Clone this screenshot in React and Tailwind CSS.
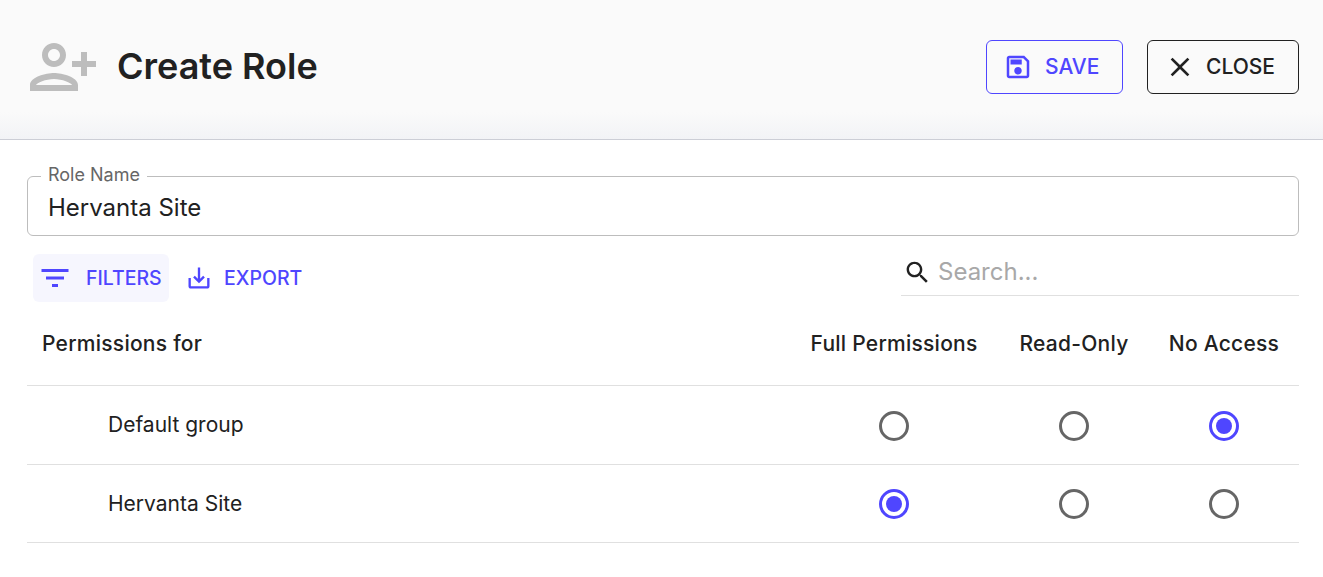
const icons = {
  personAdd:
    "M13 8c0-2.21-1.79-4-4-4S5 5.79 5 8s1.79 4 4 4 4-1.79 4-4zm-2 0c0 1.1-.9 2-2 2s-2-.9-2-2 .9-2 2-2 2 .9 2 2zM1 18v2h16v-2c0-2.66-5.33-4-8-4s-8 1.34-8 4zm2 0c.2-.71 3.3-2 6-2 2.69 0 5.77 1.28 6 2H3zm17-3v-3h3v-2h-3V7h-2v3h-3v2h3v3h2z",
  save:
    "M17 3H5c-1.11 0-2 .9-2 2v14c0 1.1.89 2 2 2h14c1.1 0 2-.9 2-2V7l-4-4zm2 16H5V5h11.17L19 7.83V19zm-7-7c-1.66 0-3 1.34-3 3s1.34 3 3 3 3-1.34 3-3-1.34-3-3-3zM6 6h9v4H6z",
  close:
    "M19 6.41 17.59 5 12 10.59 6.41 5 5 6.41 10.59 12 5 17.59 6.41 19 12 13.41 17.59 19 19 17.59 13.41 12z",
  filter: "M10 18h4v-2h-4v2zM3 6v2h18V6H3zm3 7h12v-2H6v2z",
  exportFile:
    "M19 12v7H5v-7H3v7c0 1.1.9 2 2 2h14c1.1 0 2-.9 2-2v-7h-2zm-6 .67l2.59-2.58L17 11.5l-5 5-5-5 1.41-1.41L11 12.67V3h2z",
  search:
    "M15.5 14h-.79l-.28-.27C15.41 12.59 16 11.11 16 9.5 16 5.91 13.09 3 9.5 3S3 5.91 3 9.5 5.91 16 9.5 16c1.61 0 3.09-.59 4.23-1.57l.27.28v.79l5 4.99L20.49 19l-4.99-5zm-6 0C7.01 14 5 11.99 5 9.5S7.01 5 9.5 5 14 7.01 14 9.5 11.99 14 9.5 14z",
};

function Icon({ d, size, className }) {
  return (
    <svg viewBox="0 0 24 24" width={size} height={size} fill="currentColor" className={className}>
      <path d={d} />
    </svg>
  );
}

function Radio({ checked }) {
  return (
    <div className="mt-[1px] flex justify-center">
      {checked ? (
        <span className="flex h-[30px] w-[30px] items-center justify-center rounded-full border-[3px] border-[#4f46ff]">
          <span className="h-[16px] w-[16px] rounded-full bg-[#4f46ff]" />
        </span>
      ) : (
        <span className="h-[30px] w-[30px] rounded-full border-[3px] border-[#666666]" />
      )}
    </div>
  );
}

const rows = [
  { name: "Default group", value: 2, height: "h-[79px]" },
  { name: "Hervanta Site", value: 0, height: "h-[78px]" },
];

export default function App() {
  return (
    <div className="min-h-[577px] bg-white font-['Inter',sans-serif] text-[#212121]">
      <header className="flex h-[140px] items-center justify-between border-b border-[#ccced6] bg-[linear-gradient(to_bottom,#fafafa_0,#fafafa_112px,#f2f3f6_139px)] pr-6 pl-[27px]">
        <div className="mb-[6px] flex items-center gap-[18px]">
          <Icon d={icons.personAdd} size={72} className="text-[#bdbdbd]" />
          <h1 className="mb-[2px] text-[36px] font-semibold">Create Role</h1>
        </div>
        <div className="mb-[6px] flex items-center gap-6">
          <button className="flex h-[54px] w-[137px] items-center gap-[12px] rounded-md border border-[#4f46ff] pl-[16px] text-[21px] font-medium text-[#4f46ff]">
            <Icon d={icons.save} size={30} />
            SAVE
          </button>
          <button className="flex h-[54px] w-[152px] items-center gap-[10px] rounded-md border border-[#212121] pl-[16px] text-[21px] font-medium">
            <Icon d={icons.close} size={32} />
            CLOSE
          </button>
        </div>
      </header>

      <main className="pr-6 pl-[27px]">
        <fieldset className="mt-[29px] h-[67px] rounded-md border border-[#bdbdbd] px-[13px] pb-0">
          <legend className="px-[7px] pb-[2px] text-[18px] leading-[12px] text-[#666666]">Role Name</legend>
          <div className="mt-[7px] px-[7px] text-[24px] leading-[36px]">Hervanta Site</div>
        </fieldset>

        <div className="mt-[18px] flex items-start justify-between">
          <div className="flex items-center text-[19.5px] font-medium text-[#4f46ff]">
            <button className="ml-[6px] flex h-[48px] w-[136px] items-center gap-[13px] rounded-md bg-[#f6f6fe] pl-[4px]">
              <Icon d={icons.filter} size={36} />
              <span className="mt-[2px]">FILTERS</span>
            </button>
            <button className="ml-[14px] flex h-[48px] items-center gap-[11px] px-[2px]">
              <Icon d={icons.exportFile} size={28} />
              <span className="mt-[2px]">EXPORT</span>
            </button>
          </div>
          <div className="flex h-[42px] w-[398px] items-center gap-[6px] border-b border-[#e0e0e0] pb-[5px] pl-[2px]">
            <Icon d={icons.search} size={29} />
            <span className="text-[24px] text-[#a8a8a8]">Search...</span>
          </div>
        </div>

        <div className="grid h-[84px] grid-cols-[1fr_210px_150px_150px] items-center border-b border-[#e0e0e0] text-[21px] font-medium tracking-[0.25px]">
          <div className="pl-[15px]">Permissions for</div>
          <div className="text-center">Full Permissions</div>
          <div className="text-center">Read-Only</div>
          <div className="text-center">No Access</div>
        </div>

        {rows.map((row) => (
          <div
            key={row.name}
            className={`grid grid-cols-[1fr_210px_150px_150px] items-center border-b border-[#e0e0e0] ${row.height}`}
          >
            <div className="pl-[81px] text-[21px]">{row.name}</div>
            {[0, 1, 2].map((i) => (
              <Radio key={i} checked={row.value === i} />
            ))}
          </div>
        ))}
      </main>
    </div>
  );
}
